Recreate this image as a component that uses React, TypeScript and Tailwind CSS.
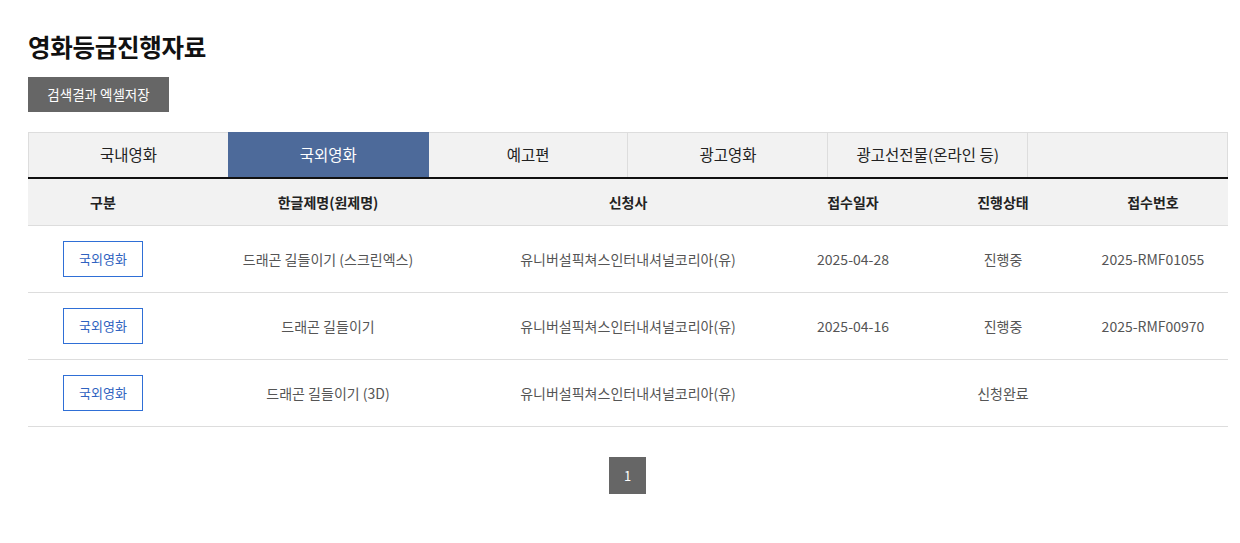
import React from "react";

const font = { fontFamily: '"Noto Sans CJK KR", "Noto Sans", sans-serif' };

const tabs = ["국내영화", "국외영화", "예고편", "광고영화", "광고선전물(온라인 등)", ""];
const rows = [
  ["드래곤 길들이기 (스크린엑스)", "유니버설픽쳐스인터내셔널코리아(유)", "2025-04-28", "진행중", "2025-RMF01055"],
  ["드래곤 길들이기", "유니버설픽쳐스인터내셔널코리아(유)", "2025-04-16", "진행중", "2025-RMF00970"],
  ["드래곤 길들이기 (3D)", "유니버설픽쳐스인터내셔널코리아(유)", "", "신청완료", ""],
];

export default function App() {
  return (
    <div className="w-[1240px] h-[543px] bg-white" style={font}>
      <div className="mx-[28px] w-[1200px] pt-[30px]">
        <h1 className="text-[24.5px] font-bold text-[#111] leading-[34px] tracking-[-0.3px]">영화등급진행자료</h1>
        <button className="mt-[13px] w-[141px] h-[35px] bg-[#666666] text-white text-[13.5px] flex items-center justify-center">
          검색결과 엑셀저장
        </button>
        <div className="mt-[20px] grid grid-cols-6 border-t border-l border-[#dddddd] h-[45px]">
          {tabs.map((t, i) =>
            i === 1 ? (
              <div key={i} className="bg-[#4d6a9a] text-white text-[15.5px] flex items-center justify-center -mt-px -ml-px">
                {t}
              </div>
            ) : (
              <div key={i} className="bg-[#f2f2f2] text-[#222] text-[15.5px] flex items-center justify-center border-r border-[#dddddd]">
                {t}
              </div>
            )
          )}
        </div>
        <div className="border-t-2 border-[#111]">
          <div className="grid grid-cols-[150px_300px_300px_150px_150px_150px] h-[47px] bg-[#f2f2f2] border-b border-[#dddddd] text-[14px] font-bold text-[#222]">
            {["구분", "한글제명(원제명)", "신청사", "접수일자", "진행상태", "접수번호"].map((h) => (
              <div key={h} className="flex items-center justify-center">{h}</div>
            ))}
          </div>
          {rows.map((r, i) => (
            <div key={i} className="grid grid-cols-[150px_300px_300px_150px_150px_150px] h-[67px] border-b border-[#dddddd] text-[14px] text-[#555]">
              <div className="flex items-center justify-center">
                <span className="w-[80px] h-[36px] border border-[#2f6fd6] text-[#2f62c0] text-[13px] flex items-center justify-center">국외영화</span>
              </div>
              {r.map((c, j) => (
                <div key={j} className="flex items-center justify-center">{c}</div>
              ))}
            </div>
          ))}
        </div>
        <div className="flex justify-center mt-[30px]">
          <div className="w-[37px] h-[37px] -ml-px bg-[#666666] text-white text-[13px] flex items-center justify-center">1</div>
        </div>
      </div>
    </div>
  );
}
